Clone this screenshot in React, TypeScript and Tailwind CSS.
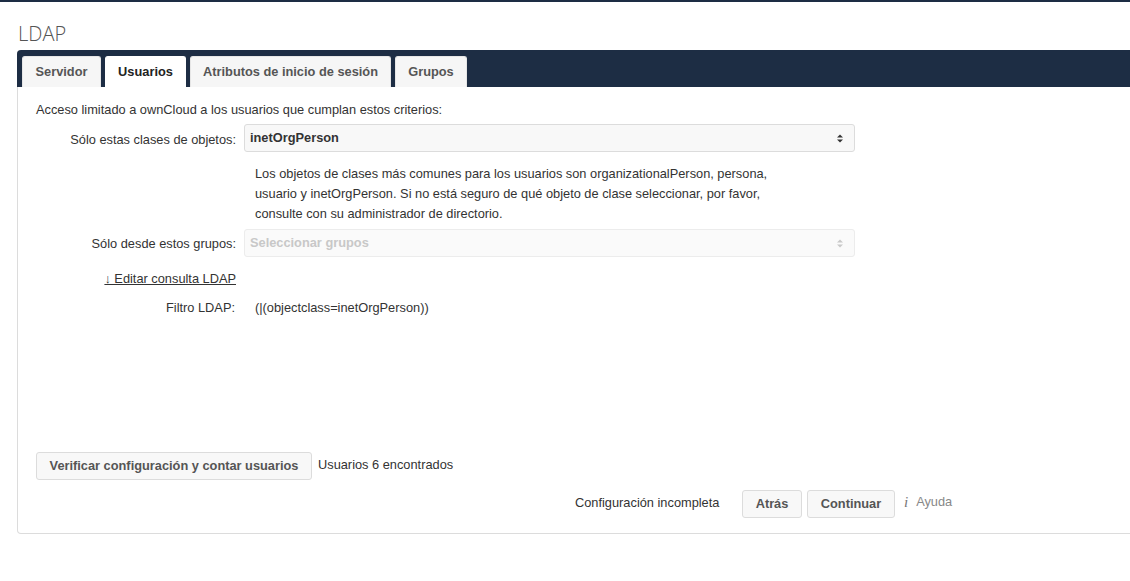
import React from "react";

const TABS = [
  { label: "Servidor", w: "w-[79px]", active: false },
  { label: "Usuarios", w: "w-[81px]", active: true },
  { label: "Atributos de inicio de sesión", w: "w-[201px]", active: false },
  { label: "Grupos", w: "w-[72px]", active: false },
];

function Arrows({ faded }: { faded?: boolean }) {
  const c = faded ? "#c8c8c8" : "#333";
  return (
    <svg width="6" height="9" viewBox="0 0 6 9" className="shrink-0">
      <path d="M0 3.5 L3 0.5 L6 3.5 Z" fill={c} />
      <path d="M0 5.5 L3 8.5 L6 5.5 Z" fill={c} />
    </svg>
  );
}

function Select({ value, disabled }: { value: string; disabled?: boolean }) {
  return (
    <div
      className={
        disabled
          ? "flex h-[28px] w-[611px] items-center justify-between rounded-[3px] border border-[#ececec] bg-[#fafafa] pl-[5px] pr-[11px] font-bold text-[#c8c8c8]"
          : "flex h-[28px] w-[611px] items-center justify-between rounded-[3px] border border-[#dcdcdc] bg-[#f8f8f8] pl-[5px] pr-[11px] font-bold text-[#333]"
      }
    >
      <span>{value}</span>
      <Arrows faded={disabled} />
    </div>
  );
}

function Btn({ children, w }: { children: React.ReactNode; w: string }) {
  return (
    <button
      className={`h-[28px] ${w} rounded-[3px] border border-[#dcdcdc] bg-[#f8f8f8] text-[12.8px] font-bold text-[#555]`}
    >
      {children}
    </button>
  );
}

export default function App() {
  return (
    <div className="h-[581px] w-[1130px] overflow-hidden bg-white font-['Liberation_Sans',Arial,sans-serif] text-[12.8px] leading-[20px] text-[#333]">
      <div className="h-[2px] bg-[#1d2d44]" />

      <h2 className="pl-[18px] pt-[18px] font-['Open_Sans',sans-serif] text-[20px] font-light leading-[28px] text-[#555]">
        LDAP
      </h2>

      <div className="ml-[17px] mt-[2px] w-[1140px] rounded-[4px] border border-t-0 border-[#dcdcdc]">
        {/* tab bar */}
        <div className="-mx-px flex h-[37px] items-end gap-[4px] rounded-t-[4px] bg-[#1d2d44] px-[5px]">
          {TABS.map((t) => (
            <div
              key={t.label}
              className={`flex h-[31px] ${t.w} items-center justify-center rounded-t-[3px] border border-b-0 font-bold ${
                t.active
                  ? "border-white bg-white text-[#222]"
                  : "border-[#e6e6e6] bg-[#f6f6f6] text-[#555]"
              }`}
            >
              {t.label}
            </div>
          ))}
        </div>

        <div className="px-[18px] pb-[15px] pt-[13px]">
          <p>Acceso limitado a ownCloud a los usuarios que cumplan estos criterios:</p>

          <div className="mt-[4px] flex items-center gap-[8px]">
            <label className="w-[200px] pt-[3px] text-right">Sólo estas clases de objetos:</label>
            <Select value="inetOrgPerson" />
          </div>

          <p className="ml-[219px] mt-[12px] w-[530px]">
            Los objetos de clases más comunes para los usuarios son organizationalPerson, persona,
            usuario y inetOrgPerson. Si no está seguro de qué objeto de clase seleccionar, por favor,
            consulte con su administrador de directorio.
          </p>

          <div className="mt-[5px] flex items-center gap-[8px]">
            <label className="w-[200px] pt-[2px] text-right">Sólo desde estos grupos:</label>
            <Select value="Seleccionar grupos" disabled />
          </div>

          <div className="mt-[12px] w-[200px] text-right">
            <a className="underline">↓ Editar consulta LDAP</a>
          </div>

          <div className="mt-[9px] flex">
            <span className="w-[199px] text-right">Filtro LDAP:</span>
            <span className="ml-[20px]">(|(objectclass=inetOrgPerson))</span>
          </div>

          <div className="mt-[134px] flex items-center gap-[6px]">
            <Btn w="w-[276px]">Verificar configuración y contar usuarios</Btn>
            <span className="-mt-[3px]">Usuarios 6 encontrados</span>
          </div>

          <div className="ml-[539px] mt-[10px] flex items-center">
            <span className="-mt-[2px] w-[167px]">Configuración incompleta</span>
            <Btn w="w-[60px]">Atrás</Btn>
            <div className="ml-[5px]">
              <Btn w="w-[88px]">Continuar</Btn>
            </div>
            <span className="-mt-[4px] ml-[9px] flex items-center gap-[8px] text-[#888]">
              <span className="font-['Liberation_Serif',serif] text-[15px] italic text-[#777]">i</span>
              <span>Ayuda</span>
            </span>
          </div>
        </div>
      </div>
    </div>
  );
}
